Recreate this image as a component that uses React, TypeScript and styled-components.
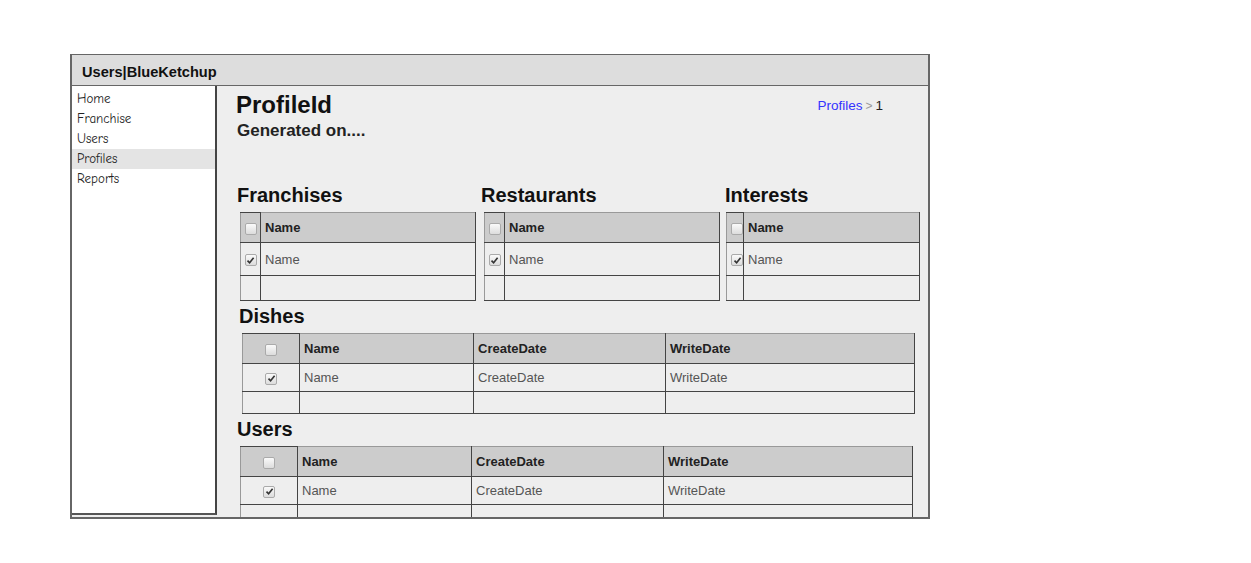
import React from 'react';
import styled, { createGlobalStyle } from 'styled-components';

const GlobalStyle = createGlobalStyle`
  html, body { margin: 0; padding: 0; background: #ffffff; }
  body { font-family: "Liberation Sans", Arial, sans-serif; color: #222; }
`;

type Column = { title: string; width: number };

const navItems = ['Home', 'Franchise', 'Users', 'Profiles', 'Reports'];

const Checkbox: React.FC<{ checked?: boolean }> = ({ checked }) => (
  <Box>
    {checked && (
      <svg width="9" height="9" viewBox="0 0 9 9">
        <path d="M1.5 4.6 L3.6 6.8 L7.6 1.8" fill="none" stroke="#333" strokeWidth="1.6" />
      </svg>
    )}
  </Box>
);

const DataTable: React.FC<{
  columns: Column[];
  checkWidth: number;
  heights: number[];
  offset: number;
  tight?: boolean;
}> = ({ columns, checkWidth, heights, offset, tight }) => (
  <Table style={{ marginLeft: offset }}>
    <colgroup>
      <col style={{ width: checkWidth }} />
      {columns.map((c) => (
        <col key={c.title} style={{ width: c.width }} />
      ))}
    </colgroup>
    <tbody>
      <HeadRow style={{ height: heights[0] }}>
        <CheckCell $tight={tight}><Checkbox /></CheckCell>
        {columns.map((c) => (
          <HeadCell key={c.title}>{c.title}</HeadCell>
        ))}
      </HeadRow>
      <tr style={{ height: heights[1] }}>
        <CheckCell $tight={tight}><Checkbox checked /></CheckCell>
        {columns.map((c) => (
          <Cell key={c.title}>{c.title}</Cell>
        ))}
      </tr>
      <tr style={{ height: heights[2] }}>
        <CheckCell $tight={tight} />
        {columns.map((c) => (
          <Cell key={c.title} />
        ))}
      </tr>
    </tbody>
  </Table>
);

const wideCols: Column[] = [
  { title: 'Name', width: 174 },
  { title: 'CreateDate', width: 192 },
  { title: 'WriteDate', width: 249 },
];

const App: React.FC = () => (
  <Page>
    <GlobalStyle />
    <Frame>
      <TitleBar>Users|BlueKetchup</TitleBar>
      <Body>
        <Sidebar>
          {navItems.map((item) => (
            <NavItem key={item} $active={item === 'Profiles'}>{item}</NavItem>
          ))}
        </Sidebar>
        <Main>
          <TopRow>
            <div>
              <PageTitle>ProfileId</PageTitle>
              <Generated>Generated on....</Generated>
            </div>
            <Crumbs>
              <CrumbLink>Profiles</CrumbLink>
              <CrumbSep>&gt;</CrumbSep>
              <span>1</span>
            </Crumbs>
          </TopRow>

          <TripleRow>
            <Section $width={244}>
              <SectionTitle>Franchises</SectionTitle>
              <DataTable columns={[{ title: 'Name', width: 215 }]} checkWidth={20} heights={[30, 33, 25]} offset={3} />
            </Section>
            <Section $width={244}>
              <SectionTitle>Restaurants</SectionTitle>
              <DataTable columns={[{ title: 'Name', width: 215 }]} checkWidth={20} heights={[30, 33, 25]} offset={3} />
            </Section>
            <Section $width={200}>
              <SectionTitle>Interests</SectionTitle>
              <DataTable columns={[{ title: 'Name', width: 176 }]} checkWidth={16} heights={[30, 33, 25]} offset={1} tight />
            </Section>
          </TripleRow>

          <SectionTitle $indent={2} $top={3}>Dishes</SectionTitle>
          <DataTable columns={wideCols} checkWidth={57} heights={[30, 28, 22]} offset={5} />

          <SectionTitle $top={3}>Users</SectionTitle>
          <DataTable columns={wideCols} checkWidth={57} heights={[30, 28, 22]} offset={3} />
        </Main>
      </Body>
    </Frame>
  </Page>
);

const Page = styled.div`
  padding: 54px 0 0 70px;
  width: 1251px;
  height: 563px;
  box-sizing: border-box;
  overflow: hidden;
`;

const Frame = styled.div`
  width: 860px;
  height: 465px;
  box-sizing: border-box;
  border: 2px solid #666;
  border-top-width: 1px;
  display: flex;
  flex-direction: column;
  background: #eeeeee;
  overflow: hidden;
`;

const TitleBar = styled.div`
  height: 31px;
  flex: none;
  background: #dddddd;
  border-bottom: 1px solid #666;
  font-weight: bold;
  font-size: 14.6px;
  color: #111;
  display: flex;
  align-items: center;
  padding-left: 10px;
  padding-top: 4px;
  box-sizing: border-box;
`;

const Body = styled.div`
  flex: 1;
  display: flex;
  min-height: 0;
`;

const Sidebar = styled.nav`
  width: 145px;
  flex: none;
  background: #ffffff;
  border-right: 2px solid #444;
  border-bottom: 2px solid #555;
  margin-bottom: 2px;
  padding-top: 3px;
  box-sizing: border-box;
`;

const NavItem = styled.div<{ $active?: boolean }>`
  height: 20px;
  line-height: 20px;
  padding-left: 5px;
  font-family: "Comic Sans MS", "Comic Neue", "Open Sans", sans-serif;
  font-size: 13px;
  color: #222;
  background: ${(p) => (p.$active ? '#e4e4e4' : 'transparent')};
`;

const Main = styled.main`
  flex: 1;
  padding: 5px 0 0 20px;
  overflow: hidden;
`;

const TopRow = styled.div`
  display: flex;
  justify-content: space-between;
  padding-right: 45px;
  height: 92px;
`;

const PageTitle = styled.h1`
  margin: 0 0 0 -1px;
  font-size: 24px;
  line-height: 28px;
  font-weight: bold;
  color: #111;
`;

const Generated = styled.div`
  margin-top: 1px;
  font-size: 17px;
  font-weight: bold;
  line-height: 22px;
  color: #222;
`;

const Crumbs = styled.div`
  padding-top: 7px;
  font-size: 13.5px;
  color: #222;
`;

const CrumbLink = styled.span`
  color: #3333ff;
`;

const CrumbSep = styled.span`
  color: #999;
  font-size: 12px;
  margin: 0 3px;
`;

const TripleRow = styled.div`
  display: flex;
`;

const Section = styled.section<{ $width: number }>`
  width: ${(p) => p.$width}px;
  flex: none;
`;

const SectionTitle = styled.h2<{ $indent?: number; $top?: number }>`
  margin: ${(p) => p.$top ?? 0}px 0 5px ${(p) => p.$indent ?? 0}px;
  font-size: 20px;
  line-height: 24px;
  font-weight: bold;
  color: #111;
`;

const Table = styled.table`
  border-collapse: collapse;
  table-layout: fixed;
  font-size: 13px;
  border: 1px solid #999;
`;

const HeadRow = styled.tr`
  background: #cccccc;
`;

const HeadCell = styled.td`
  border: 1px solid #444;
  border-top-color: #999;
  padding: 0 4px;
  font-weight: bold;
  color: #222;
`;

const Cell = styled.td`
  border: 1px solid #444;
  padding: 0 4px;
  color: #555;
`;

const CheckCell = styled.td<{ $tight?: boolean }>`
  border: 1px solid #444;
  border-left-color: #999;
  padding: 0;
  text-align: ${(p) => (p.$tight ? 'left' : 'center')};
  padding-left: ${(p) => (p.$tight ? '4px' : '0')};
  overflow: visible;
  white-space: nowrap;
`;

const Box = styled.span`
  display: inline-flex;
  align-items: center;
  justify-content: center;
  width: 12px;
  height: 12px;
  box-sizing: border-box;
  border: 1px solid #aaa;
  border-radius: 2px;
  background: linear-gradient(#fafafa, #dcdcdc);
  vertical-align: middle;
`;

export default App;
